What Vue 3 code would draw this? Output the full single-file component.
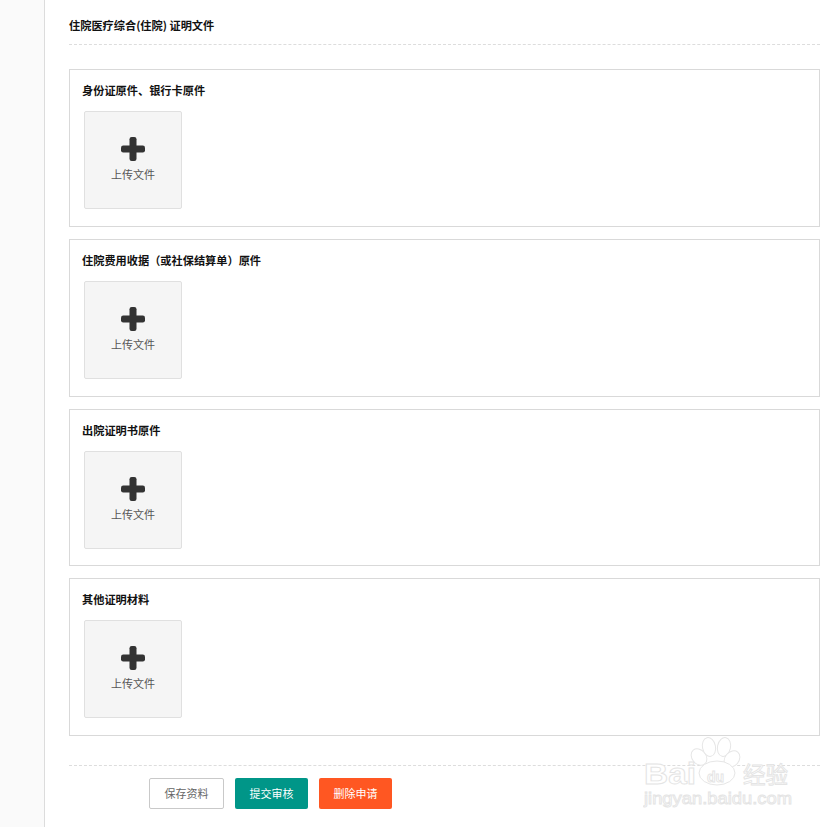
<script setup>
const sections = [
  { title: '身份证原件、银行卡原件', cls: '' },
  { title: '住院费用收据（或社保结算单）原件', cls: '' },
  { title: '出院证明书原件', cls: 'short' },
  { title: '其他证明材料', cls: '' }
]
</script>

<template>
  <div class="page">
    <aside class="side"></aside>
    <main class="main">
      <h2 class="heading">住院医疗综合(住院) 证明文件</h2>
      <section v-for="s in sections" :key="s.title" class="card" :class="s.cls">
        <h3 class="card-title">{{ s.title }}</h3>
        <div class="upload">
          <svg class="plus" width="24" height="24" viewBox="0 0 24 24">
            <rect x="8.5" y="0" width="7" height="24" rx="2.2" fill="#333" />
            <rect x="0" y="8.5" width="24" height="7" rx="2.2" fill="#333" />
          </svg>
          <span class="upload-text">上传文件</span>
        </div>
      </section>
      <div class="actions">
        <button class="btn save">保存资料</button>
        <button class="btn submit">提交审核</button>
        <button class="btn remove">删除申请</button>
      </div>
    </main>
    <svg class="mark" width="170" height="90" viewBox="0 0 170 90">
      <g fill="#fff" stroke="#e6e6e6" stroke-width="1">
        <ellipse cx="56" cy="21" rx="7" ry="9" transform="rotate(-40 56 21)" />
        <ellipse cx="66" cy="11" rx="6.5" ry="9.5" transform="rotate(-12 66 11)" />
        <ellipse cx="81" cy="11" rx="6.5" ry="9.5" transform="rotate(12 81 11)" />
        <ellipse cx="89" cy="23" rx="7" ry="9" transform="rotate(40 89 23)" />
        <ellipse cx="74" cy="37" rx="18" ry="12" />
      </g>
      <text x="1" y="48" class="mark-big" textLength="52" lengthAdjust="spacingAndGlyphs">Bai</text>
      <text x="64" y="46" class="mark-du">du</text>
      <text x="100" y="47" class="mark-cn">经验</text>
      <text x="1" y="68" class="mark-url" textLength="148" lengthAdjust="spacingAndGlyphs">jingyan.baidu.com</text>
    </svg>
  </div>
</template>

<style scoped>
.page {
  position: relative;
  display: flex;
  width: 837px;
  height: 827px;
  overflow: hidden;
  background: #fff;
  font-family: "Noto Sans CJK SC", "Liberation Sans", sans-serif;
}
.side {
  width: 44px;
  flex: none;
  background: #fafafa;
  border-right: 1px solid #dcdcdc;
}
.main {
  width: 751px;
  margin-left: 24px;
  display: flex;
  flex-direction: column;
}
.heading {
  margin: 0 0 24px;
  height: 45px;
  padding-top: 16px;
  box-sizing: border-box;
  border-bottom: 1px dashed #ddd;
  font-size: 11.2px;
  line-height: 18px;
  font-weight: 700;
  color: #111;
}
.card {
  box-sizing: border-box;
  height: 158px;
  margin-bottom: 12px;
  padding: 11px 12px 0;
  border: 1px solid #d9d9d9;
}
.card.short {
  height: 157px;
}
.card-title {
  margin: 0 0 12px;
  font-size: 11.2px;
  line-height: 18px;
  font-weight: 700;
  color: #111;
}
.upload {
  box-sizing: border-box;
  width: 98px;
  height: 98px;
  margin-left: 2px;
  padding-top: 25px;
  display: flex;
  flex-direction: column;
  align-items: center;
  background: #f5f5f5;
  border: 1px solid #e0e0e0;
  border-radius: 2px;
}
.plus {
  display: block;
}
.upload-text {
  margin-top: 4px;
  font-size: 11px;
  line-height: 18px;
  color: #555;
}
.actions {
  margin-top: 17px;
  padding: 12px 0 0 80px;
  border-top: 1px dashed #ddd;
  display: flex;
  gap: 11px;
}
.btn {
  box-sizing: border-box;
  width: 73px;
  height: 31px;
  padding: 0 0 2px;
  border: 0;
  border-radius: 2px;
  font-family: inherit;
  font-size: 11px;
  color: #fff;
}
.save {
  width: 75px;
  background: #fff;
  border: 1px solid #c9c9c9;
  color: #666;
}
.submit {
  background: #009688;
}
.remove {
  background: #ff5722;
}
.mark {
  position: absolute;
  left: 643px;
  top: 736px;
}
.mark text {
  fill: #fff;
  stroke: #e4e4e4;
  stroke-width: 0.9px;
  font-family: "Liberation Sans", sans-serif;
}
.mark-big {
  font-size: 29px;
  font-weight: 700;
}
.mark-du {
  font-size: 14px;
  font-weight: 700;
}
.mark .mark-cn {
  font-size: 22.5px;
  font-family: "Noto Sans CJK SC", sans-serif;
}
.mark-url {
  font-size: 17px;
}
</style>
